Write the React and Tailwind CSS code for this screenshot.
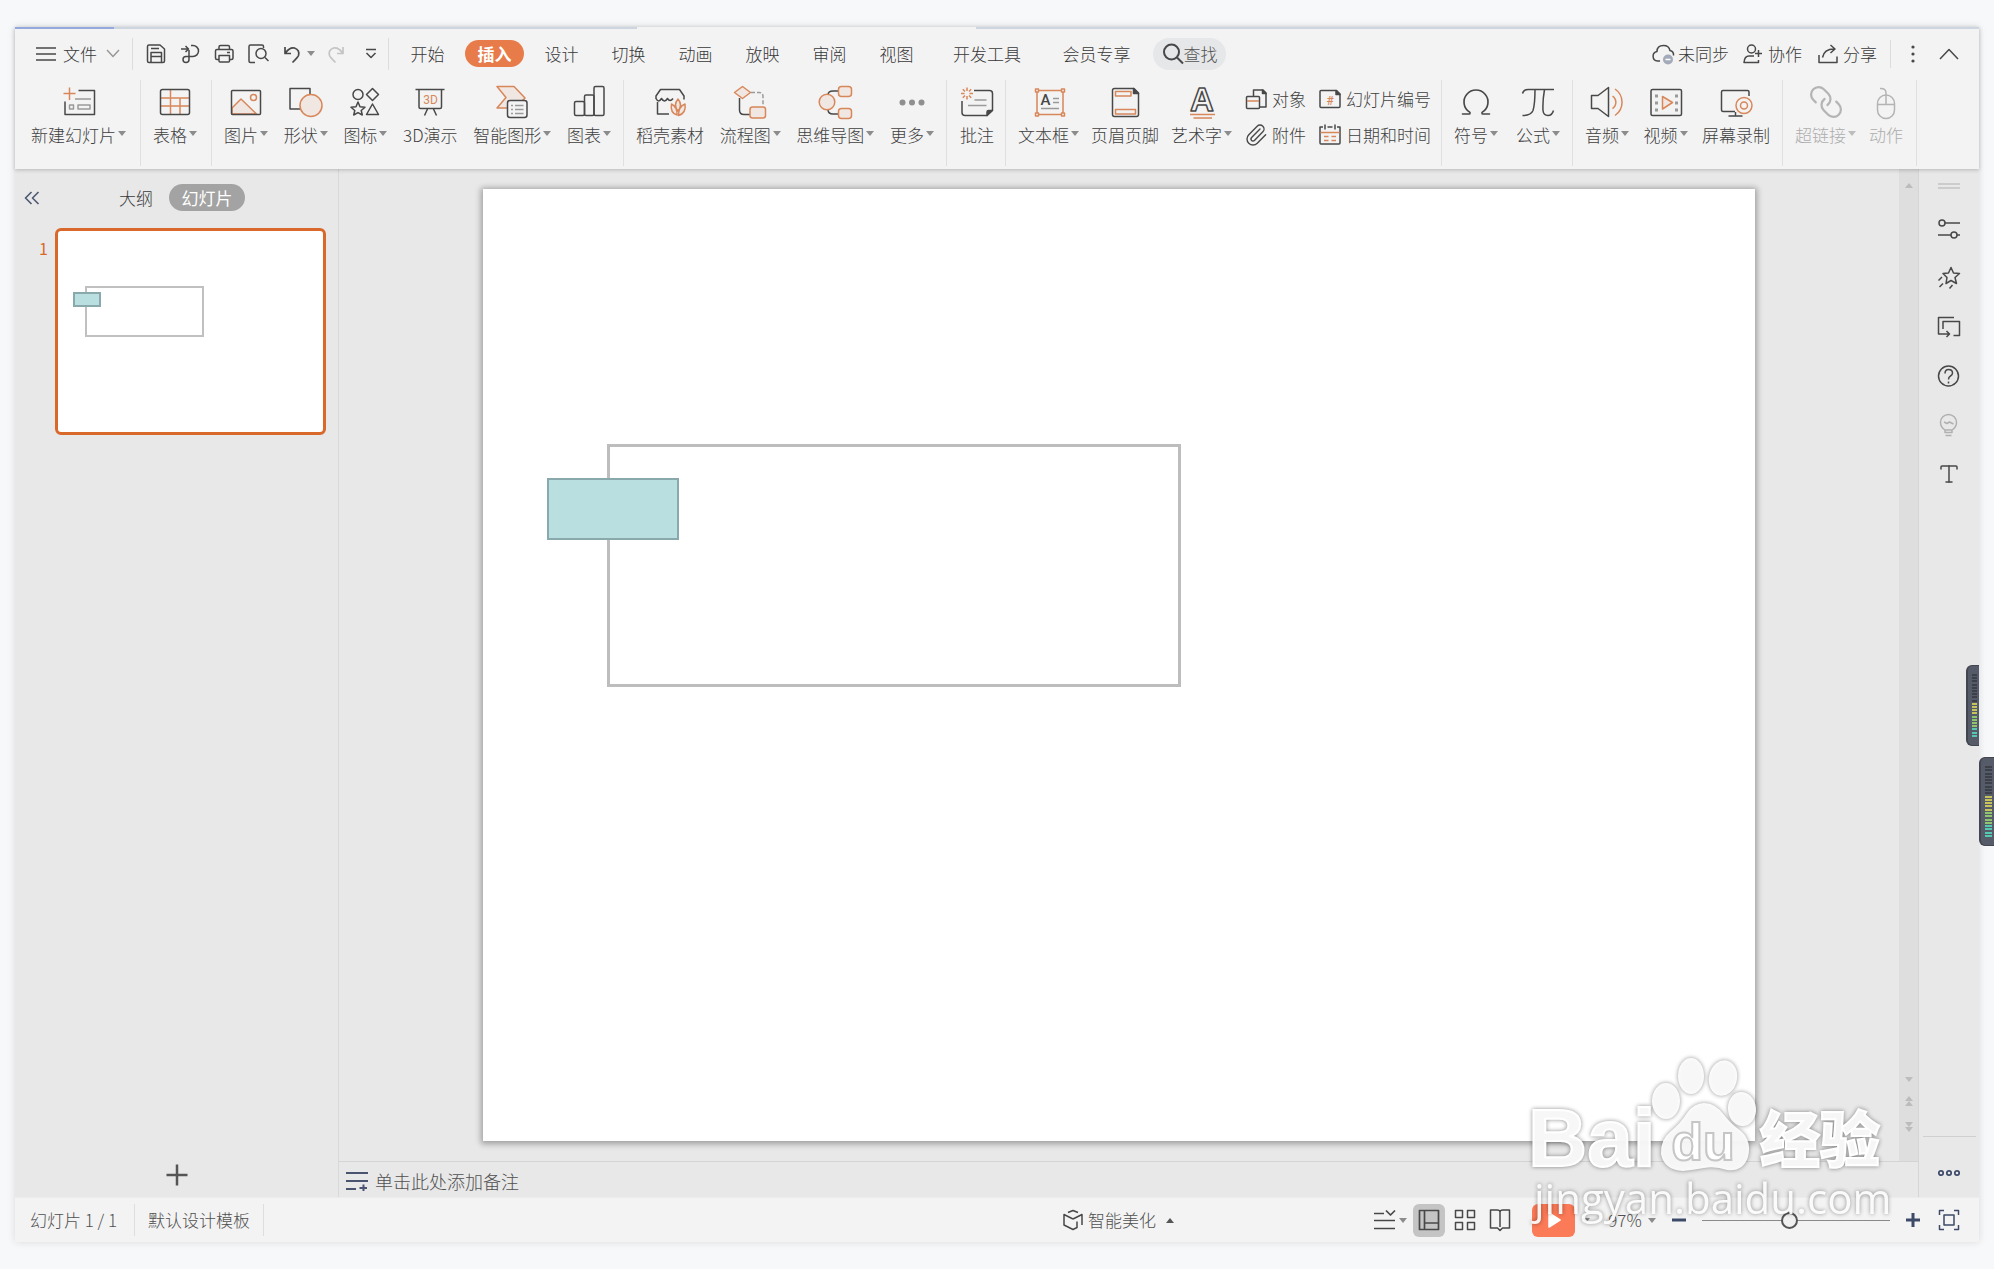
import React from "react";
import { Link, Omega, Paperclip, Type } from "lucide-react";

const INK = "#484848";
const ACC = "#d8875a";
const TINT = "#f1e7e2";
const MID = "#9a9a9a";
const PAPER = "#f3f3f3";

function Svg({ w = 36, h = 36, sw = 1.5, color = INK, children, className = "" }) {
  return (
    <svg
      width={w}
      height={h}
      viewBox={`0 0 ${w} ${h}`}
      fill="none"
      stroke={color}
      strokeWidth={sw}
      strokeLinejoin="round"
      className={`shrink-0 ${className}`}
      aria-hidden="true"
    >
      {children}
    </svg>
  );
}

function Caret({ up = false, color = "#8c8c8c" }) {
  return (
    <svg width="8" height="5" viewBox="0 0 8 5" className="shrink-0" aria-hidden="true">
      <path d={up ? "M4 0L8 5H0Z" : "M0 0H8L4 5Z"} fill={color} />
    </svg>
  );
}

/* ---------- ribbon icons ---------- */

const NewSlideIcon = (
  <Svg>
    <path d="M8.5 3.5V16M2.5 9.5H14.5" stroke={ACC} />
    <path d="M17.5 6.5H33.5V30.5H4V17.5" />
    <path d="M14 15H30M8.5 21h4v4h-4zM17 21h12v4H17z" stroke={MID} />
  </Svg>
);
const TableIcon = (
  <Svg>
    <path d="M4 14H33M4 22H33M13.5 6V31M23 14V31" stroke={ACC} />
    <rect x="3.5" y="5.5" width="29" height="25" rx="2" />
  </Svg>
);
const PictureIcon = (
  <Svg>
    <path d="M4 24L13 15L28.5 30H4Z" fill={TINT} stroke={ACC} />
    <circle cx="25.5" cy="13.5" r="3" stroke={ACC} />
    <rect x="3.5" y="6.5" width="29" height="24" rx="1" />
  </Svg>
);
const ShapeIcon = (
  <Svg>
    <rect x="2" y="4.5" width="20" height="20.5" />
    <circle cx="23" cy="21.5" r="11" fill={TINT} stroke={ACC} />
  </Svg>
);
const GlyphIcon = (
  <Svg>
    <circle cx="11" cy="10.5" r="5" />
    <path d="M25.5 4.5L31.5 10.5L25.5 16.5L19.5 10.5Z" />
    <path d="M25.5 20L31.5 30.5H19.5Z" />
    <path d="M11 18L13 22.8L18 23.3L14.2 26.5L15.3 31L11 28.6L6.7 31L7.8 26.5L4 23.3L9 22.8Z" />
  </Svg>
);
const ThreeDIcon = (
  <Svg>
    <path d="M3.5 5.5H32.5M7 5.5V23q0 1.5 1.5 1.5H28q1.5 0 1.5-1.5V5.5M15.5 25L12.5 31.5M21.5 25L24.5 31.5" />
    <text x="18.5" y="19.5" textAnchor="middle" fontSize="12" fontFamily="Roboto" fontWeight="400" fill={ACC} stroke="none">3D</text>
  </Svg>
);
const SmartIcon = (
  <Svg>
    <path d="M3 2.5H20L31 14L21 24H3L12 13.5Z" fill={TINT} stroke={ACC} />
    <rect x="13.5" y="16.5" width="19.5" height="17" rx="2.5" fill={PAPER} />
    <path d="M17 21.5h2M17 25.5h2M17 29.5h2M21 21.5h8.5M21 25.5h8.5M21 29.5h8.5" stroke={MID} />
  </Svg>
);
const ChartIcon = (
  <Svg>
    <rect x="3.5" y="17.5" width="10" height="14" rx="1.5" />
    <rect x="13.5" y="11" width="9.5" height="20.5" rx="1.5" />
    <rect x="23" y="2.5" width="10" height="29" rx="1.5" />
  </Svg>
);
const ShopIcon = (
  <Svg>
    <path d="M4 15V12L8.5 5.5H27.5L32 12V15.5M4 14.5q2.5 5 5.5 0q3 5 6 0q2.5 4 5.5 0M5.5 18V30H17" />
    <path d="M26 15q5 6 0 12q-5-6 0-12ZM19.5 20q6 3 5.5 11q-7-2-5.5-11ZM33 20q1.5 9-6.5 11.5q0-9 6.5-11.5Z" stroke={ACC} fill={TINT} />
  </Svg>
);
const FlowIcon = (
  <Svg>
    <path d="M7.5 14V26q0 4.5 4.5 4.5H18" />
    <path d="M19 8.5H27q4 0 4 4V22" stroke={MID} strokeDasharray="4 2" />
    <path d="M10.5 2.5L18.5 8.5L10.5 14.5L2.5 8.5Z" fill={TINT} stroke={ACC} />
    <rect x="18" y="23" width="15.5" height="11" rx="2.5" fill={TINT} stroke={ACC} />
  </Svg>
);
const MindIcon = (
  <Svg>
    <path d="M11 11q0-4 5-4H21M11 25.5q0 4.5 5 4.5H21" />
    <circle cx="10" cy="18" r="7.8" fill={TINT} stroke={ACC} />
    <rect x="21.5" y="2.5" width="13" height="10" rx="3" fill={TINT} stroke={ACC} />
    <rect x="21.5" y="24.5" width="13" height="10" rx="3" fill={TINT} stroke={ACC} />
  </Svg>
);
const MoreIcon = (
  <Svg>
    <g fill="#8f8f8f" stroke="none">
      <circle cx="8.5" cy="18.5" r="3" />
      <circle cx="18" cy="18.5" r="3" />
      <circle cx="27.5" cy="18.5" r="3" />
    </g>
  </Svg>
);
const CommentIcon = (
  <Svg>
    <path d="M15 6.5H30.5q3 0 3 3V26L28 31.5H6q-3 0-3-3V17" />
    <path d="M33.5 26.5L28 31.5V28q0-1.5 1.5-1.5Z" fill={INK} />
    <path d="M15.5 16H27.5M9 21.5H27.5" stroke={MID} />
    <path d="M8 3.5V7M8 12V15.5M2 9.5H5.5M10.5 9.5H14M3.8 5.3L6 7.5M10 11.5L12.2 13.7M12.2 5.3L10 7.5M6 11.5L3.8 13.7" stroke={ACC} />
  </Svg>
);
const TextBoxIcon = (
  <Svg>
    <rect x="6" y="6.5" width="26" height="24" stroke={ACC} />
    <g fill={PAPER} stroke={ACC}>
      <rect x="4.5" y="5" width="3" height="3" />
      <rect x="30.5" y="5" width="3" height="3" />
      <rect x="4.5" y="29" width="3" height="3" />
      <rect x="30.5" y="29" width="3" height="3" />
    </g>
    <path d="M22 14.5h6M22 18.5h6M10 24.5H28" stroke={MID} />
    <text x="14.5" y="21" textAnchor="middle" fontSize="15" fontWeight="500" fontFamily="Roboto" fill={INK} stroke="none">A</text>
  </Svg>
);
const HeaderIcon = (
  <Svg>
    <path d="M7.5 4.5H27L31.5 9V30.5q0 2-2 2H7.5q-2 0-2-2V6.5q0-2 2-2Z" />
    <path d="M26.5 4.5L31.5 9.5H26.5Z" fill={INK} />
    <path d="M8.5 7.5H24V12H8.5ZM8.5 25.5H28.5V30H8.5Z" stroke={ACC} />
  </Svg>
);
const ArtIcon = (
  <Svg className="overflow-visible">
    <text x="18" y="27" textAnchor="middle" fontSize="33" fontWeight="700" fontFamily="Liberation Sans" fill={PAPER} stroke={INK}>A</text>
    <path d="M6 30.5H31M9.5 34H28" stroke={ACC} />
  </Svg>
);
const AudioIcon = (
  <Svg>
    <path d="M2.5 11.5H9L19.5 3.5V32.5L9 24.5H2.5Z" />
    <path d="M23.5 12a7.5 7.5 0 0 1 0 12.5M26 5a16 16 0 0 1 0 26.5" stroke={ACC} />
  </Svg>
);
const VideoIcon = (
  <Svg>
    <rect x="3" y="5.5" width="30.5" height="26" rx="1.5" />
    <path d="M8.5 10.5v3M8.5 17.5v3M8.5 24.5v3M28.5 10.5v3M28.5 17.5v3M28.5 24.5v3" stroke={MID} strokeWidth="3" />
    <path d="M14.5 12.5L24.5 18.5L14.5 25Z" fill={TINT} stroke={ACC} />
  </Svg>
);
const RecordIcon = (
  <Svg>
    <path d="M31 12V8q0-1.5-1.5-1.5H5q-1.5 0-1.5 1.5V25.5q0 2 1.5 2H17M17.5 28V32M10.5 32H24.5" />
    <circle cx="26" cy="21.5" r="8" fill={PAPER} stroke={ACC} />
    <circle cx="26" cy="21.5" r="3.5" stroke={ACC} />
  </Svg>
);
const MouseIcon = (
  <Svg color="#b4b4b4">
    <rect x="9.5" y="11" width="17" height="23.5" rx="8.5" />
    <path d="M9.5 20.5H26.5M18 20V9q0-5-6-4.5" />
  </Svg>
);
const PiIcon = (
  <Svg>
    <path d="M2.5 9.5Q3.5 5.5 8 5.5H34M15 5.5Q15 20 13 26.5Q11 31.5 2.5 31.5M24.5 5.5Q22.5 17 23 26.5Q23.5 31.5 28 31.5Q32 31.5 33.5 26.5" />
  </Svg>
);
const OmegaIcon = <Omega size={36} strokeWidth={1.1} color={INK} />;
const LinkIcon = <Link size={36} strokeWidth={1.5} color="#b4b4b4" className="rotate-90" />;

/* ---------- small ribbon icons ---------- */

const ObjectIcon = (
  <Svg w={24} h={24}>
    <path d="M9.5 9V3H19L22 6V20H16" />
    <path d="M18.5 3L22 6.5H18.5Z" fill={INK} />
    <rect x="2.5" y="9.5" width="13" height="12" rx="1" />
    <path d="M3 14H15" stroke={ACC} />
  </Svg>
);
const NumberIcon = (
  <Svg w={24} h={24}>
    <path d="M3 3.5H18.5L22 7V19.5q0 1-1 1H3q-1 0-1-1V4.5q0-1 1-1Z" />
    <path d="M18 3.5L22 7.5H18Z" fill={INK} />
    <text x="12" y="17.5" textAnchor="middle" fontSize="12" fontFamily="Roboto" fontWeight="500" fill={ACC} stroke="none">#</text>
  </Svg>
);
const DateIcon = (
  <Svg w={24} h={24}>
    <path d="M5 4H2V20q0 1 1 1H21q1 0 1-1V4H19M9.5 4H14.5M7 1.5V6.5M17 1.5V6.5" />
    <path d="M2.5 9.5H21.5M6 13.5h4.5M13.5 13.5H18M6 17.5h4.5M13.5 17.5H18" stroke={ACC} />
  </Svg>
);

/* ---------- quick access ---------- */

const quick = [
  ["保存", <Svg w={22} h={22} key="a"><path d="M2.5 3.5q0-1.5 1.5-1.5H15l4.5 4V18q0 1.5-1.5 1.5H4q-1.5 0-1.5-1.5ZM6 19.5V9.5H16.5V19.5M6.5 13.5H16M6 5.5H14" /></Svg>],
  ["输出", <Svg w={22} h={22} key="b"><path d="M2 6H9M6.5 3L9.5 6L6.5 9M12 2.5H14a5.5 5.5 0 0 1 0 11H10V16.5a3 3 0 1 1-3-3H10V7" /></Svg>],
  ["打印", <Svg w={22} h={22} key="c"><path d="M6 6V4q0-1.5 1.5-1.5H15q1.5 0 1.5 1.5V6M6 16.5H4q-1.5 0-1.5-1.5V8q0-1.5 1.5-1.5H18.5q1.5 0 1.5 1.5V15q0 1.5-1.5 1.5H16.5M6 12.5H16.5V18q0 1-1 1H7q-1 0-1-1ZM14 9.5h3" /></Svg>],
  ["预览", <Svg w={22} h={22} key="d"><path d="M8 19.5H3.5q-1.5 0-1.5-1.5V3.5Q2 2 3.5 2H15q1.5 0 1.5 1.5V5M18 14.5L21.5 18" /><circle cx="14" cy="10.5" r="5" /></Svg>],
];

/* ---------- ribbon ---------- */

function Tool({ icon, label, caret, off }) {
  return (
    <button className={`flex flex-col items-center gap-[3px] whitespace-nowrap ${off ? "text-[#adadad]" : "text-[#404040]"}`}>
      {icon}
      <span className="flex items-center gap-0.5 leading-6">
        {label}
        {caret && <span className="-mt-1 flex"><Caret color={off ? "#bdbdbd" : undefined} /></span>}
      </span>
    </button>
  );
}

function Group({ className, children }) {
  return (
    <div className={`flex shrink-0 items-start justify-between border-r border-[#e0e0e0] pt-1 ${className}`}>
      {children}
    </div>
  );
}

function SmallTool({ icon, label }) {
  return (
    <button className="flex items-center gap-1 whitespace-nowrap leading-6 text-[#404040]">
      {icon}
      {label}
    </button>
  );
}

const tabs = ["开始", "插入", "设计", "切换", "动画", "放映", "审阅", "视图"];

function MenuBar() {
  return (
    <nav className="flex h-[49px] items-center text-[#383838]">
      <button className="flex items-center pl-[21px]">
        <Svg w={20} h={16} sw={1.5}><path d="M0 2H20M0 8H20M0 14H20" /></Svg>
        <span className="ml-[7px]">文件</span>
        <Svg w={14} h={9} sw={1.5} color="#999" className="ml-[9px]"><path d="M1 1L7 7.5L13 1" /></Svg>
      </button>
      <div className="ml-3 h-8 w-px bg-[#dcdcdc]" />
      <div className="flex w-[255px] items-center pl-[6px]">
        {quick.map(([name, icon]) => (
          <button key={name} aria-label={name} className="flex w-[34px] justify-center">{icon}</button>
        ))}
        <button aria-label="撤销" className="ml-[6px] flex items-center gap-1">
          <Svg w={22} h={22} sw={1.7}><path d="M4 4V10.5H10M4.5 10Q8.5 4 13.5 5Q19 7 17.5 12.5Q17 14 11.5 19.5" /></Svg>
          <Caret />
        </button>
        <button aria-label="恢复" className="ml-[10px]">
          <Svg w={22} h={22} sw={1.7} color="#c4c4c4"><path d="M18 4V10.5H12M17.5 10Q13.5 4 8.5 5Q3 7 4.500 12.5Q5 14 10.5 19.5" /></Svg>
        </button>
        <button aria-label="自定义快速访问" className="ml-[18px]">
          <Svg w={12} h={12}><path d="M1 1.5H11M1.5 5L6 9.5L10.5 5" /></Svg>
        </button>
      </div>
      <div className="h-8 w-px bg-[#dcdcdc]" />
      <div className="ml-[9px] flex items-center gap-2 whitespace-nowrap">
        {tabs.map((t) => (
          <button
            key={t}
            className={
              t === "插入"
                ? "h-[27px] w-[59px] rounded-full bg-[#e87b4a] font-bold leading-6 text-white"
                : "h-[27px] w-[59px] leading-6"
            }
          >
            {t}
          </button>
        ))}
        <button className="w-[106px]">开发工具</button>
        <button className="w-[97px]">会员专享</button>
        <button className="flex h-8 w-[73px] items-center justify-center rounded-full bg-[#e6e7e8] text-[#555]">
          <Svg w={22} h={22} sw={2}><circle cx="9.5" cy="9" r="7.5" /><path d="M15 14.5L21 20.5" /></Svg>
          查找
        </button>
      </div>
      <div className="ml-auto flex items-center whitespace-nowrap pr-5 pt-px">
        <button className="flex items-center gap-[3px]">
          <Svg w={24} h={22}>
            <path d="M9 18H6.5a4.8 4.8 0 0 1-.5-9.5q0-6 6.5-6q5.5 0 6.5 5q4 1 3.5 5" />
            <circle cx="17" cy="16.5" r="5" fill="#a3abbb" stroke="none" />
            <path d="M14.5 16.5H19.5" stroke="#fff" />
          </Svg>
          未同步
        </button>
        <button className="ml-[13px] flex items-center gap-1">
          <Svg w={22} h={22}><circle cx="9.5" cy="6" r="4" /><path d="M12 13H7q-4.5 0-5 6.5H16.5V17M13 10.5H20M16.5 7V14" /></Svg>
          协作
        </button>
        <button className="ml-[15px] flex items-center gap-1">
          <Svg w={22} h={22}><path d="M2 12V19.5H20V13.5M5.5 14.5Q7 6 17 6M13.5 2L18 6L13.5 10" /></Svg>
          分享
        </button>
        <div className="ml-[13px] h-7 w-px bg-[#dcdcdc]" />
        <button aria-label="更多选项" className="ml-5">
          <Svg w={4} h={18}><g fill={INK} stroke="none"><circle cx="2" cy="2" r="1.6" /><circle cx="2" cy="9" r="1.6" /><circle cx="2" cy="16" r="1.6" /></g></Svg>
        </button>
        <button aria-label="收起功能区" className="ml-6">
          <Svg w={20} h={12}><path d="M1 11L10 1.5L19 11" /></Svg>
        </button>
      </div>
    </nav>
  );
}

function Ribbon() {
  return (
    <div className="mt-0.5 flex h-[86px] overflow-hidden">
      <Group className="w-[126px] px-4"><Tool icon={NewSlideIcon} label="新建幻灯片" caret /></Group>
      <Group className="w-[71px] px-3"><Tool icon={TableIcon} label="表格" caret /></Group>
      <Group className="w-[412px] px-3">
        <Tool icon={PictureIcon} label="图片" caret />
        <Tool icon={ShapeIcon} label="形状" caret />
        <Tool icon={GlyphIcon} label="图标" caret />
        <Tool icon={ThreeDIcon} label="3D演示" />
        <Tool icon={SmartIcon} label="智能图形" caret />
        <Tool icon={ChartIcon} label="图表" caret />
      </Group>
      <Group className="w-[323px] px-3">
        <Tool icon={ShopIcon} label="稻壳素材" />
        <Tool icon={FlowIcon} label="流程图" caret />
        <Tool icon={MindIcon} label="思维导图" caret />
        <Tool icon={MoreIcon} label="更多" caret />
      </Group>
      <Group className="w-[59px] px-3"><Tool icon={CommentIcon} label="批注" /></Group>
      <Group className="w-[436px] pl-3 pr-[10px]">
        <Tool icon={TextBoxIcon} label="文本框" caret />
        <Tool icon={HeaderIcon} label="页眉页脚" />
        <Tool icon={ArtIcon} label="艺术字" caret />
        <div className="flex flex-col gap-3 pt-[3px]">
          <SmallTool icon={ObjectIcon} label="对象" />
          <SmallTool icon={<Paperclip size={24} strokeWidth={1.4} color={INK} />} label="附件" />
        </div>
        <div className="flex flex-col gap-3 pt-[3px]">
          <SmallTool icon={NumberIcon} label="幻灯片编号" />
          <SmallTool icon={DateIcon} label="日期和时间" />
        </div>
      </Group>
      <Group className="w-[131px] px-3">
        <Tool icon={OmegaIcon} label="符号" caret />
        <Tool icon={PiIcon} label="公式" caret />
      </Group>
      <Group className="w-[210px] px-3">
        <Tool icon={AudioIcon} label="音频" caret />
        <Tool icon={VideoIcon} label="视频" caret />
        <Tool icon={RecordIcon} label="屏幕录制" />
      </Group>
      <Group className="w-[134px] px-3">
        <Tool icon={LinkIcon} label="超链接" caret off />
        <Tool icon={MouseIcon} label="动作" off />
      </Group>
    </div>
  );
}

/* ---------- slide list ---------- */

function SlidePanel() {
  return (
    <aside className="flex w-[324px] shrink-0 flex-col border-r border-[#d9d9d9]">
      <div className="flex items-center pl-[9px] pt-[15px]">
        <button aria-label="收起面板">
          <Svg w={16} h={14} color="#4f5a75" sw={1.7}><path d="M7.5 1L1.5 7L7.5 13M14.5 1L8.5 7L14.5 13" /></Svg>
        </button>
        <button className="ml-[79px] text-[#383838]">大纲</button>
        <button className="ml-4 h-[27px] w-[76px] rounded-full bg-[#a3a3a3] font-normal leading-6 text-white">幻灯片</button>
      </div>
      <div className="flex items-start pl-6 pt-[17px]">
        <span className="w-4 pt-2 text-base font-normal leading-6 text-[#d9692b]">1</span>
        <button aria-label="第1张幻灯片" className="relative h-[207px] w-[271px] rounded-md border-[3px] border-[#d9692b] bg-white">
          <span className="absolute left-[27px] top-[55px] h-[51px] w-[119px] border-2 border-[#c0c0c0]" />
          <span className="absolute left-[15px] top-[61px] h-[15px] w-[28px] border-2 border-[#8aa9ac] bg-[#b9dfe1]" />
        </button>
      </div>
      <button aria-label="新建幻灯片" className="mx-auto mb-[10px] mt-auto">
        <Svg w={24} h={24} sw={2.5} color="#555"><path d="M12 1.5V22.5M1.5 12H22.5" /></Svg>
      </button>
    </aside>
  );
}

/* ---------- canvas ---------- */

function Scrollbar() {
  return (
    <div className="flex w-[19px] shrink-0 flex-col items-center bg-[#dedede] pt-[14px]">
      <Caret up color="#bcbcbc" />
      <div className="mt-auto flex flex-col items-center pb-[29px]">
        <Caret color="#bcbcbc" />
        <div className="mt-[14px] flex flex-col"><Caret up color="#bcbcbc" /><Caret up color="#bcbcbc" /></div>
        <div className="mt-4 flex flex-col"><Caret color="#bcbcbc" /><Caret color="#bcbcbc" /></div>
      </div>
    </div>
  );
}

function Canvas() {
  return (
    <main className="flex min-w-0 flex-1 flex-col">
      <div className="flex min-h-0 flex-1">
        <div className="flex min-w-0 flex-1 px-36 py-5">
          <div className="relative flex-1 bg-white shadow-[0_1px_6px_2px_rgba(0,0,0,0.32)]">
            <div className="absolute left-[124px] top-[255px] h-[243px] w-[574px] border-[3px] border-[#bdbdbd]" />
            <div className="absolute left-[64px] top-[289px] h-[62px] w-[132px] border-2 border-[#8aa9ac] bg-[#b9dfe1]" />
          </div>
        </div>
        <Scrollbar />
      </div>
      <label className="flex h-9 items-center gap-[7px] border-t border-[#d4d4d4] pl-[7px] pt-0.5">
        <Svg w={22} h={20} color="#4a5470" sw={2}><path d="M0 2H22M0 10H22M0 18H10M13.5 17H21M17.5 13.5V20" /></Svg>
        <input
          aria-label="备注"
          placeholder="单击此处添加备注"
          className="min-w-0 flex-1 bg-transparent text-[18px] leading-6 outline-none placeholder:text-[#505050]"
        />
      </label>
    </main>
  );
}

/* ---------- right rail ---------- */

const rail = [
  ["属性", <Svg w={24} h={24} key="1"><circle cx="5" cy="6" r="3" /><circle cx="17" cy="18" r="3" /><path d="M8 6H23M1 18H14M20 18H23" /></Svg>],
  ["动画", <Svg w={24} h={24} key="2"><path d="M14 1.5L16.5 7L22.5 7.5L18 11.5L19.5 17.5L14 14.5L9 17.5L10 11.5L6 7.5L11.5 7ZM5 11L1.5 14.5M6 17.5L2.5 21M15.5 19L12.5 22.5" /></Svg>],
  ["切换", <Svg w={24} h={24} key="3"><path d="M17 2.5H1.5V19H12M9.5 16L12.5 19L9.5 22M6 14V6.5H22.5V20.5H16.5" /></Svg>],
  ["帮助", <Svg w={24} h={24} key="4"><circle cx="11.5" cy="12" r="10" /><path d="M8 9.5q0-4 3.5-4q4 0 4 3.5q0 2-2 3q-2 1-2 3.5M11.5 17.5V19.5" /></Svg>],
  ["提示", <Svg w={24} h={24} key="5" color="#b0b0b0"><path d="M8 17Q3.5 14 3.5 9.5a8 8 0 0 1 16 0Q19.5 14 15 17ZM8 17.5v2h7v-2M8.5 22.5h6M7 9l3 1.5l2.5-1.5l4 2" /></Svg>],
  ["文字", <Type key="6" size={24} strokeWidth={1.5} color={INK} />],
];

function Rail() {
  return (
    <aside className="flex w-[61px] shrink-0 flex-col items-center border-l border-[#d6d6d6] pt-[13px]">
      <Svg w={22} h={8} color="#cccccc" sw={2}><path d="M0 2H22M0 6H22" /></Svg>
      <div className="mt-[27px] flex flex-col gap-[25px]">
        {rail.map(([name, icon]) => (
          <button key={name} aria-label={name}>{icon}</button>
        ))}
      </div>
      <div className="mt-auto h-px w-[53px] bg-[#d0d0d0]" />
      <button aria-label="更多" className="mb-5 mt-8">
        <Svg w={24} h={8} color="#3c4a68" sw={1.7}><circle cx="4" cy="4" r="2.2" /><circle cx="12" cy="4" r="2.2" /><circle cx="20" cy="4" r="2.2" /></Svg>
      </button>
    </aside>
  );
}

/* ---------- status bar ---------- */

function StatusBar() {
  return (
    <footer className="flex h-[45px] shrink-0 items-center whitespace-nowrap border-t border-[#ececec] bg-[#f3f3f3] text-[#505050]">
      <span className="w-[119px] pl-[15px]">幻灯片 1 / 1</span>
      <div className="h-8 w-px bg-[#dedede]" />
      <span className="px-[13px]">默认设计模板</span>
      <div className="h-8 w-px bg-[#dedede]" />
      <div className="flex-1" />
      <button className="flex w-[112px] items-center">
        <Svg w={22} h={22} className="mr-1"><path d="M6 3.5L11 1.5L16 3.5M11 10L2 5.5V16L11 20.5L15 18.5V12.5M11 10L20 5.5V16" /></Svg>
        智能美化
        <span className="ml-[10px] flex"><Caret up color="#555" /></span>
      </button>
      <button aria-label="备注选项" className="ml-[199px] flex items-center gap-0.5">
        <Svg w={24} h={22} sw={1.7}><path d="M1 4.5H11M13 1.5L17.5 6L22 1.5M1 11.5H22M1 19.5H22" /></Svg>
        <Caret />
      </button>
      <button aria-label="普通视图" className="ml-[6px] flex h-[33px] w-8 items-center justify-center rounded-md bg-[#c4c4c4]">
        <Svg w={22} h={22} sw={1.7}><path d="M1.5 1.5H20.5V20.5H1.5ZM6.5 1.5V20.5M6.5 14H20.5" /></Svg>
      </button>
      <button aria-label="幻灯片浏览" className="ml-[9px]">
        <Svg w={22} h={22}><path d="M1.5 1.5h7v7h-7zM13.5 1.5h7v7h-7zM1.5 13.5h7v7h-7zM13.5 13.5h7v7h-7z" /></Svg>
      </button>
      <button aria-label="阅读视图" className="ml-[13px]">
        <Svg w={22} h={24}><path d="M11 4V19M1.5 2H8Q11 2 11 4Q11 2 14 2H20.5V20H13.5L11 22.5L8.5 20H1.5Z" /></Svg>
      </button>
      <button aria-label="播放" className="ml-[21px] flex h-[33px] w-[43px] items-center justify-center rounded-md bg-[#fb7a57]">
        <Svg w={14} h={18} color="#fff"><path d="M2 2L13 9L2 16Z" fill="#fff" /></Svg>
      </button>
      <span className="ml-[7px] flex"><Caret /></span>
      <button className="ml-[18px] flex items-center gap-[6px]"><span className="w-[34px]">97%</span><Caret /></button>
      <button aria-label="缩小" className="ml-[16px]">
        <Svg w={14} h={14} color="#3c4a68" sw={3}><path d="M0 7H14" /></Svg>
      </button>
      <input
        type="range"
        aria-label="缩放"
        defaultValue="46"
        className="ml-4 h-5 w-[188px] cursor-pointer appearance-none bg-transparent [&::-webkit-slider-runnable-track]:h-px [&::-webkit-slider-runnable-track]:bg-[#8a8a8a] [&::-webkit-slider-thumb]:-mt-2 [&::-webkit-slider-thumb]:size-[17px] [&::-webkit-slider-thumb]:appearance-none [&::-webkit-slider-thumb]:rounded-full [&::-webkit-slider-thumb]:border-2 [&::-webkit-slider-thumb]:border-solid [&::-webkit-slider-thumb]:border-[#555] [&::-webkit-slider-thumb]:bg-[#f0f0f0]"
      />
      <button aria-label="放大" className="ml-4">
        <Svg w={14} h={14} color="#3c4a68" sw={3}><path d="M0 7H14M7 0V14" /></Svg>
      </button>
      <button aria-label="适应窗口" className="ml-[18px] mr-[19px]">
        <Svg w={22} h={22} color="#3c4a68" sw={1.5}><path d="M1.5 6V1.5H6M16 1.5H20.5V6M20.5 16V20.5H16M6 20.5H1.5V16M6 6H16V16H6Z" /></Svg>
      </button>
    </footer>
  );
}

/* ---------- overlays ---------- */

function Meter({ className, bars, lit }) {
  return (
    <div className={`absolute flex flex-col justify-between rounded-l-md border-y border-l-2 border-[#43464f] bg-[#565b69] ${className}`}>
      {Array.from({ length: bars }, (_, i) => (
        <span
          key={i}
          className={`h-0.5 w-full ${
            i < bars - lit ? "bg-[#3d4049]" : i < bars - lit / 1.5 ? "bg-[#c6c35a]" : i < bars - lit / 3 ? "bg-[#8fc46e]" : "bg-[#55c9b0]"
          }`}
        />
      ))}
    </div>
  );
}

function Watermark() {
  return (
    <svg
      width="376"
      height="190"
      viewBox="0 0 376 190"
      className="pointer-events-none absolute bottom-[25px] right-[97px] overflow-visible [filter:drop-shadow(0_0_2px_rgba(0,0,0,0.45))]"
      fill="#fff"
      fillOpacity="0.92"
      aria-hidden="true"
    >
      <ellipse cx="145" cy="47" rx="14" ry="18" />
      <ellipse cx="170" cy="22" rx="13" ry="18" />
      <ellipse cx="202" cy="24" rx="14" ry="18" transform="rotate(12 202 24)" />
      <ellipse cx="221" cy="55" rx="14" ry="17" transform="rotate(-6 221 55)" />
      <path d="M183 49Q195 49 204 62Q210 70 220 77Q231 87 227 103Q222 118 206 116Q194 112 183 114Q172 116 162 117Q143 116 140 100Q139 86 150 77Q159 70 166 59Q173 49 183 49Z" />
      <text x="7" y="112" fontFamily="Liberation Sans" fontWeight="700" fontSize="82" stroke="#fff" strokeWidth="2">Bai</text>
      <text x="182" y="106" textAnchor="middle" fontFamily="Liberation Sans" fontWeight="700" fontSize="52" stroke="#c6c6c6" strokeWidth="2">du</text>
      <text x="239" y="108" fontFamily="Noto Sans CJK SC" fontWeight="900" fontSize="60" stroke="#fff" strokeWidth="2">经验</text>
      <text x="13" y="160" fontFamily="Open Sans" fontSize="42" fontWeight="400">jingyan.baidu.com</text>
    </svg>
  );
}

export default function App() {
  return (
    <div className="relative flex h-screen flex-col overflow-hidden bg-[#f7f8fa] px-[15px] py-[27px] font-['Noto_Sans_CJK_SC',sans-serif] text-[17px] font-light leading-6">
      <div className="flex min-h-0 flex-1 flex-col bg-[#e8e8e8] shadow-[0_0_8px_rgba(0,0,0,0.12)]">
        <header className="relative bg-[#f3f3f3] pb-[3px] shadow-[0_1px_4px_rgba(0,0,0,0.22)]">
          <div className="flex h-0.5">
            <div className="w-[99px] bg-[#93a8dc]" />
            <div className="w-[523px] bg-[#cdd5e0]" />
            <div className="w-[339px]" />
            <div className="flex-1 bg-[#cdd5e0]" />
          </div>
          <MenuBar />
          <Ribbon />
        </header>
        <div className="flex min-h-0 flex-1">
          <SlidePanel />
          <Canvas />
          <Rail />
        </div>
        <StatusBar />
      </div>
      <Meter className="right-[15px] top-[665px] h-[81px] w-[13px] py-2 pl-1 pr-0.5" bars={20} lit={11} />
      <Meter className="right-0 top-[757px] h-[89px] w-[15px] py-2 pl-1 pr-0.5" bars={22} lit={13} />
      <Watermark />
    </div>
  );
}
